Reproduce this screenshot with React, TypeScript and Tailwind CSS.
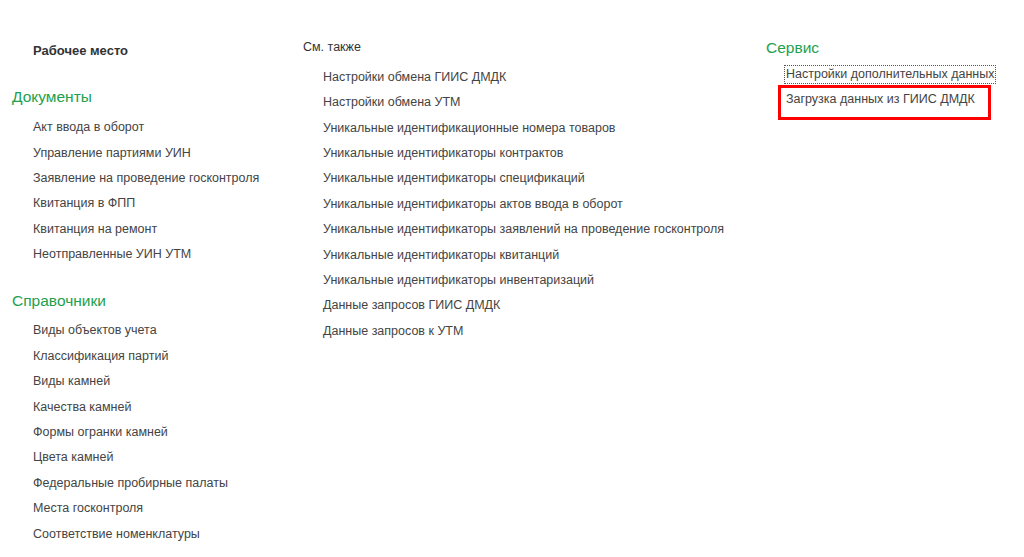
import React from "react";

const font = { fontFamily: '"Liberation Sans", Arial, sans-serif' };

function Item({ text }: { text: string }) {
  return (
    <div className="h-[25.4px] leading-[25.4px] text-[12.5px] text-[#444] whitespace-nowrap">
      {text}
    </div>
  );
}

function Heading({ text, className = "" }: { text: string; className?: string }) {
  return (
    <div className={`h-[28px] leading-[28px] text-[15.5px] text-[#22a04e] whitespace-nowrap ${className}`}>
      {text}
    </div>
  );
}

const documents = [
  "Акт ввода в оборот",
  "Управление партиями УИН",
  "Заявление на проведение госконтроля",
  "Квитанция в ФПП",
  "Квитанция на ремонт",
  "Неотправленные УИН УТМ",
];

const catalogs = [
  "Виды объектов учета",
  "Классификация партий",
  "Виды камней",
  "Качества камней",
  "Формы огранки камней",
  "Цвета камней",
  "Федеральные пробирные палаты",
  "Места госконтроля",
  "Соответствие номенклатуры",
];

const seeAlso = [
  "Настройки обмена ГИИС ДМДК",
  "Настройки обмена УТМ",
  "Уникальные идентификационные номера товаров",
  "Уникальные идентификаторы контрактов",
  "Уникальные идентификаторы спецификаций",
  "Уникальные идентификаторы актов ввода в оборот",
  "Уникальные идентификаторы заявлений на проведение госконтроля",
  "Уникальные идентификаторы квитанций",
  "Уникальные идентификаторы инвентаризаций",
  "Данные запросов ГИИС ДМДК",
  "Данные запросов к УТМ",
];

export default function App() {
  return (
    <div className="w-[1024px] h-[557px] bg-white overflow-hidden flex" style={font}>
      {/* Left column: workplace, documents, catalogs */}
      <div className="w-[303px] pl-[12px] pt-[38px] flex flex-col">
        <div className="pl-[21px] h-[25px] leading-[25px] text-[13px] font-bold text-[#333]">
          Рабочее место
        </div>
        <Heading text="Документы" className="mt-[19.5px]" />
        <div className="pl-[21px] mt-[4.8px]">
          {documents.map((t) => (
            <Item key={t} text={t} />
          ))}
        </div>
        <Heading text="Справочники" className="mt-[19.3px]" />
        <div className="pl-[21px] mt-[3.5px]">
          {catalogs.map((t) => (
            <Item key={t} text={t} />
          ))}
        </div>
      </div>

      {/* Middle column: see also */}
      <div className="w-[463px] pt-[34.8px] flex flex-col">
        <div className="h-[25.4px] leading-[25.4px] text-[12.5px] text-[#333]">См. также</div>
        <div className="pl-[20px] mt-[4.6px]">
          {seeAlso.map((t) => (
            <Item key={t} text={t} />
          ))}
        </div>
      </div>

      {/* Right column: service */}
      <div className="flex-1 pt-[34px] flex flex-col">
        <Heading text="Сервис" />
        <div className="pl-[18px] mt-[3px] flex flex-col">
          <div className="self-start border border-dotted border-[#555] px-[1px] h-[19px] leading-[17px] text-[12.5px] text-[#444] whitespace-nowrap">
            Настройки дополнительных данных
          </div>
          <div className="relative h-[25.4px] leading-[25.4px] mt-[3px] pl-[2px] text-[12.5px] text-[#444] whitespace-nowrap">
            Загрузка данных из ГИИС ДМДК
            <div className="absolute left-[-6px] top-[-2px] w-[213px] h-[35px] border-[3px] border-[#ff0000]" />
          </div>
        </div>
      </div>
    </div>
  );
}
